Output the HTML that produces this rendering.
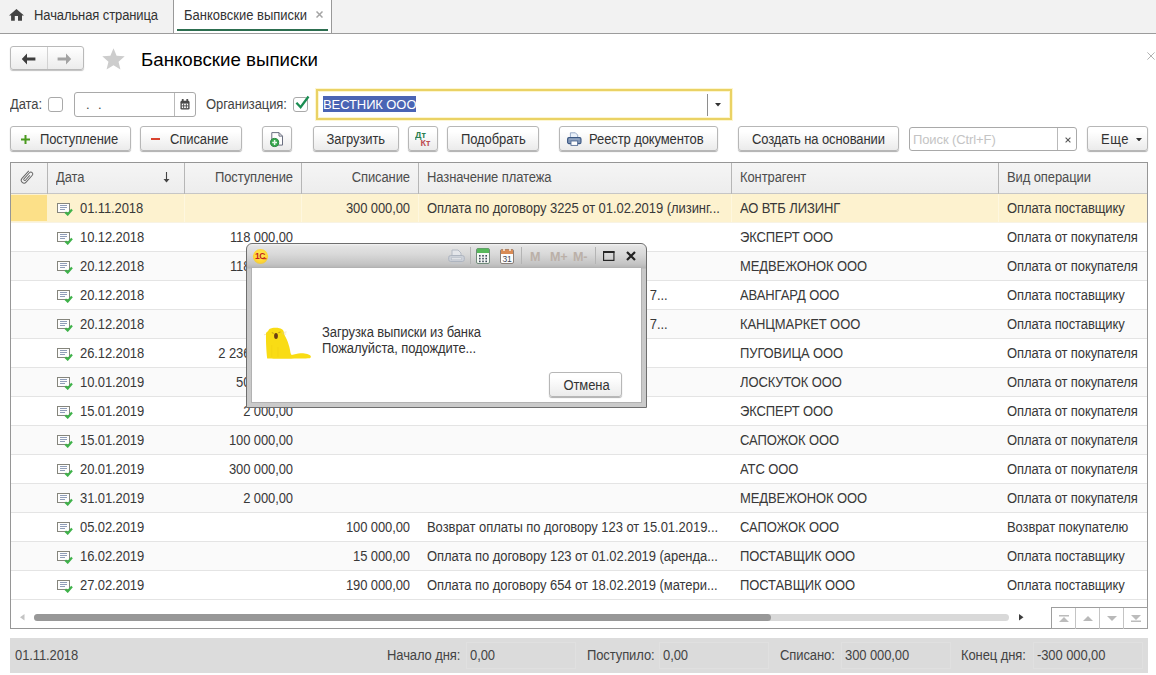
<!DOCTYPE html>
<html lang="ru">
<head>
<meta charset="utf-8">
<title>Банковские выписки</title>
<style>
*{box-sizing:border-box;margin:0;padding:0}
html,body{width:1156px;height:675px;overflow:hidden;background:#fff}
body{font-family:"Liberation Sans",Arial,sans-serif;font-size:13px;color:#333;position:relative;letter-spacing:-0.1px}
.abs{position:absolute}
/* tabs */
#tabs{position:absolute;left:0;top:0;width:1156px;height:34px;background:#f2f2f2;border-bottom:1px solid #9c9c9c}
#tabs .sep{position:absolute;top:0;width:1px;height:33px;background:#999}
#tab2{position:absolute;left:174px;top:0;width:157px;height:33px;background:#fff}
#tab2 .ul{position:absolute;left:3px;right:3px;top:29px;height:2px;background:#2d6e50}
.tt{position:absolute;top:8px;line-height:16px;white-space:nowrap;color:#333}
/* nav */
#nav{position:absolute;left:10px;top:46px;width:74px;height:24px;border:1px solid #b9b9b9;border-radius:3px;background:linear-gradient(#fff,#ececec);box-shadow:0 1px 1px rgba(0,0,0,.25)}
#nav .s{position:absolute;left:36px;top:0;width:1px;height:22px;background:#d2d2d2}
#title{position:absolute;left:141px;top:49px;font-size:18.7px;line-height:22px;color:#000;letter-spacing:0;white-space:nowrap}
/* form */
.lbl{position:absolute;line-height:16px;white-space:nowrap;color:#444}
.cb{position:absolute;width:15px;height:15px;border:1px solid #a9a9a9;border-radius:3px;background:#fff}
.inp{position:absolute;border:1px solid #a9a9a9;border-radius:3px;background:#fff}
.btn{position:absolute;top:126px;height:25px;border:1px solid #b7b7b7;border-radius:3px;background:linear-gradient(#ffffff 20%,#ebebeb);box-shadow:0 1px 1px rgba(0,0,0,.32);white-space:nowrap;line-height:23px;color:#333}
.btn span{position:absolute;top:2px;line-height:22px}
.tt,.lbl,#hdr .h,.row .t,#foot span,#modal .msg{transform:scaleY(1.07);transform-origin:0 12.5px}
.btn span{transform:scaleY(1.07);transform-origin:0 15.5px}
/* table */
#tbl{position:absolute;left:10px;top:162px;width:1138px;height:467px;border:1px solid #969696;background:#fff;overflow:hidden}
#hdr{position:absolute;left:0;top:0;width:1136px;height:31px;background:linear-gradient(#f5f5f5,#ededed);border-bottom:1px solid #c6c6c6}
#hdr .h{position:absolute;top:7px;line-height:16px;color:#4d4d4d;white-space:nowrap}
#hdr .vs{position:absolute;top:0;width:1px;height:31px;background:#b6b6b6}
.row{position:absolute;left:11px;width:1136px;height:29px;border-bottom:1px solid #e4e4e4;background:#fff}
.row.alt{background:#fafafa}
.row.sel{background:#fdf2cf;border-bottom-color:#f8f3e3}
.row .c0{position:absolute;left:0;top:1px;width:36px;height:26px;background:#fce088}
.row i{position:absolute;top:0;width:1px;height:28px;background:#fef7df}
.row .t{position:absolute;top:7px;line-height:16px;white-space:nowrap;color:#383838}
.row .di{position:absolute;left:46px;top:9px}
.row .d{left:69px}
.row .n1{right:854px}
.row .n2{right:737px}
.row .p{left:416px;letter-spacing:-0.05px}
.row .pr{right:479.5px}
.row .k{left:729px}
.row .v{left:996px}
/* footer */
#foot{position:absolute;left:10px;top:638px;width:1138px;height:35px;background:#dcdcdc}
#foot span{position:absolute;top:10px;line-height:16px;white-space:nowrap;color:#444}
#foot i{position:absolute;top:4px;height:27px;background:#dbdbdb;border:1px solid #e0e0e0}
/* modal */
#modal{position:absolute;left:246px;top:243px;width:401px;height:165px;border:1px solid #6e6e6e;border-radius:6px 6px 0 0;background:linear-gradient(#f4f4f4 0,#e4e4e4 2px,#d9d9d9 10px,#c4c4c4 20px,#b4b4b4 24px,#c8c8c8 25px,#cacaca 100%)}
#modal .in{position:absolute;left:5px;top:24px;width:389px;height:134px;background:#fff;border:0;box-shadow:0 0 0 1px #b2b2b2}
.mm{top:5.5px;line-height:14px;font-size:12.6px;font-weight:bold;color:#bbb0a8;letter-spacing:-0.3px}
#modal .msg{position:absolute;line-height:16px;color:#333;white-space:nowrap}
</style>
</head>
<body>
<div id="tabs">
  <svg class="abs" style="left:9px;top:9px" width="15" height="12" viewBox="0 0 15 12"><path d="M7.450 0L15 6.600H13V11.700H9V6.900H5.800V11.700H2.100V6.600H0z" fill="#444"/></svg>
  <span class="tt" style="left:34px">Начальная страница</span>
  <div class="sep" style="left:173px"></div>
  <div id="tab2"><div class="ul"></div></div>
  <span class="tt" style="left:184px;letter-spacing:0">Банковские выписки</span>
  <svg class="abs" style="left:316px;top:11px" width="7" height="7" viewBox="0 0 7 7"><path d="M0.5 0.5l6 6M6.500 0.5L0.5 6.500" stroke="#a4a4a4" stroke-width="1.500"/></svg>
  <div class="sep" style="left:331px"></div>
</div>

<div id="nav"><div class="s"></div>
  <svg class="abs" style="left:10px;top:5.500px" width="15" height="12" viewBox="0 0 15 12"><path d="M6 0.5L0.8 6 6 11.5V7.4h8.4V4.6H6z" fill="#3d3d3d"/></svg>
  <svg class="abs" style="left:46px;top:5.500px" width="15" height="12" viewBox="0 0 15 12"><path d="M9 0.5L14.2 6 9 11.5V7.4H0.6V4.6H9z" fill="#a3a3a3"/></svg>
</div>
<svg class="abs" style="left:102px;top:48px" width="23" height="23" viewBox="0 0 23 23"><path d="M11.50 0.20L14.62 7.71L22.72 8.35L16.54 13.64L18.44 21.55L11.50 17.30L4.56 21.55L6.46 13.64L0.28 8.35L8.38 7.71z" fill="#cdcdcd"/></svg>
<div id="title">Банковские выписки</div>
<svg class="abs" style="left:1146.500px;top:52px" width="8" height="8" viewBox="0 0 8 8"><path d="M0.400 0.400l7.200 7.200M7.600 0.400L0.400 7.600" stroke="#a9a9a9" stroke-width="0.900"/></svg>

<span class="lbl" style="left:10px;top:97px">Дата:</span>
<div class="cb" style="left:48px;top:97px"></div>
<div class="inp" style="left:74px;top:92px;width:122px;height:25px">
  <span class="abs" style="left:11px;top:4px;line-height:16px;color:#444;letter-spacing:8.500px">..</span>
  <div class="abs" style="left:99px;top:0;width:1px;height:23px;background:#b9b9b9"></div>
  <svg class="abs" style="left:105px;top:6px" width="10" height="11" viewBox="0 0 11 12"><rect x="0.5" y="2" width="10" height="9.5" rx="1.5" fill="#4a4a4a"/><rect x="2" y="0" width="2" height="3" fill="#4a4a4a"/><rect x="7" y="0" width="2" height="3" fill="#4a4a4a"/><rect x="2" y="5" width="7" height="5" fill="#fff"/><path d="M4 5v5M7 5v5M2 7.5h7" stroke="#4a4a4a" stroke-width="1"/></svg>
</div>
<span class="lbl" style="left:206px;top:97px">Организация:</span>
<div class="cb" style="left:293px;top:97px"></div>
<svg class="abs" style="left:295px;top:93px" width="15" height="16" viewBox="0 0 15 16"><path d="M1.400 9.700l4.200 4.500L13.500 3.500" fill="none" stroke="#1a8d52" stroke-width="2.300"/></svg>
<div class="abs" style="left:316px;top:89px;width:416px;height:31px;border:2px solid #ead265;background:#fff;box-shadow:0 0 0 1px #fdf6d0, inset 0 0 0 1px #fdf6d0">
  <span class="abs" style="left:5px;top:5px;height:16px;line-height:18px;background:#4a64b4;color:#fff;padding:0 0px;white-space:nowrap">ВЕСТНИК ООО</span>
  <div class="abs" style="left:389px;top:3px;width:1px;height:22px;background:#8e8e8e"></div>
  <svg class="abs" style="left:396.500px;top:12px" width="6" height="3.500" viewBox="0 0 7 4"><path d="M0 0h7L3.5 4z" fill="#333"/></svg>
</div>

<!-- toolbar -->
<div class="btn" style="left:10px;width:121px"><svg class="abs" style="left:10px;top:8px" width="9" height="9" viewBox="0 0 9 9"><path d="M4.5 0v9M0 4.5h9" stroke="#4a9a1e" stroke-width="2"/></svg><span style="left:29px">Поступление</span></div>
<div class="btn" style="left:140px;width:102px"><div class="abs" style="left:10px;top:11px;width:9px;height:2px;background:#d9432f"></div><span style="left:29px">Списание</span></div>
<div class="btn" style="left:262px;width:30px"><svg class="abs" style="left:7px;top:4px" width="16" height="17" viewBox="0 0 16 17"><path d="M1.800 1.600h7.200l3.500 3.500v9h-10.700z" fill="#fdfdfd" stroke="#6b6f80"/><path d="M9 1.600v3.500h3.500" fill="none" stroke="#6b6f80"/><circle cx="4.600" cy="11.500" r="4.100" fill="#35a84c" stroke="#1f7f38" stroke-width=".9"/><path d="M4.600 9.100v4.800M2.200 11.500h4.800" stroke="#e9f7ea" stroke-width="1.500"/></svg></div>
<div class="btn" style="left:313px;width:86px"><span style="left:12.500px">Загрузить</span></div>
<div class="btn" style="left:408px;width:30px"><span style="left:6px;top:0px;font-size:9px;font-weight:bold;color:#2b8050;letter-spacing:0;line-height:12px;top:2px">Дт</span><span style="left:11.500px;font-size:9px;font-weight:bold;color:#bd4d52;letter-spacing:0;line-height:12px;top:10px">Кт</span></div>
<div class="btn" style="left:447px;width:92px"><span style="left:13px">Подобрать</span></div>
<div class="btn" style="left:559px;width:159px"><svg class="abs" style="left:7px;top:5px" width="15" height="14" viewBox="0 0 15 14"><path d="M3.400 6V0.800h5l2.300 2.300V6z" fill="#eaf1fa" stroke="#8ea3c2" stroke-width=".9"/><rect x="0.600" y="5.600" width="13.400" height="6" rx="1.400" fill="#7f95b6" stroke="#3c5883" stroke-width="1.100"/><path d="M2 7h10.600" stroke="#a9bad2" stroke-width=".8"/><rect x="4" y="9" width="6.600" height="4.400" fill="#fff" stroke="#5b7299" stroke-width=".9"/></svg><span style="left:29px">Реестр документов</span></div>
<div class="btn" style="left:738px;width:161px"><span style="left:13px">Создать на основании</span></div>
<div class="inp" style="left:909px;top:127px;width:168px;height:24px">
  <span class="abs" style="left:3px;top:3.500px;line-height:16px;color:#c4c4c4;white-space:nowrap">Поиск (Ctrl+F)</span>
  <div class="abs" style="left:147px;top:0;width:1px;height:22px;background:#b9b9b9"></div>
  <svg class="abs" style="left:154.500px;top:8.500px" width="6" height="6" viewBox="0 0 7 7"><path d="M0.700 0.700l5.600 5.600M6.300 0.700L0.700 6.300" stroke="#5a5a5a" stroke-width="1.300"/></svg>
</div>
<div class="btn" style="left:1087px;width:61px"><span style="left:13px;letter-spacing:0.500px">Еще</span><svg class="abs" style="left:47.700px;top:10.500px" width="6" height="3.500" viewBox="0 0 7 4"><path d="M0 0h7L3.5 4z" fill="#333"/></svg></div>

<!-- table -->
<div id="tbl">
  <div id="hdr">
    <div class="vs" style="left:36px"></div><div class="vs" style="left:173px"></div><div class="vs" style="left:290px"></div><div class="vs" style="left:407px"></div><div class="vs" style="left:720px"></div><div class="vs" style="left:987px"></div>
    <svg class="abs" style="left:8px;top:5.500px" width="16" height="16" viewBox="-8 -8 16 16"><path transform="rotate(42)" d="M-2.800 -5.800V4.400a2.800 2.800 0 0 0 5.600 0V-4.800a1.900 1.900 0 0 0-3.800 0V3.400a1 1 0 0 0 2 0V-3" fill="none" stroke="#666" stroke-width="0.950"/></svg>
    <span class="h" style="left:45px">Дата</span>
    <svg class="abs" style="left:151.800px;top:9px" width="7" height="11" viewBox="0 0 7 11"><path d="M3.500 0v8" stroke="#444" stroke-width="1.100"/><path d="M0.500 7h6L3.500 10.500z" fill="#444"/></svg>
    <span class="h" style="right:854px">Поступление</span>
    <span class="h" style="right:737px">Списание</span>
    <span class="h" style="left:416px">Назначение платежа</span>
    <span class="h" style="left:729px">Контрагент</span>
    <span class="h" style="left:996px">Вид операции</span>
  </div>
</div>
<div class="row sel" style="top:194px"><div class="c0"></div><i style="left:173px"></i><i style="left:290px"></i><i style="left:407px"></i><i style="left:720px"></i><i style="left:987px"></i><svg class="di" width="16" height="13" viewBox="0 0 16 13"><rect x="0.5" y="0.5" width="12" height="9" fill="#fdfdfd" stroke="#85857c"/><path d="M3 2.500h7M3 4.500h7M3 6.500h5" stroke="#8f9db8" stroke-width="1"/><path d="M8.3 9.2l2.4 2.3 4.3-5" fill="none" stroke="#3fb24a" stroke-width="2.2"/></svg><span class="t d">01.11.2018</span><span class="t n1"></span><span class="t n2">300 000,00</span><span class="t p">Оплата по договору 3225 от 01.02.2019 (лизинг...</span><span class="t k">АО ВТБ ЛИЗИНГ</span><span class="t v">Оплата поставщику</span></div>
<div class="row" style="top:223px"><svg class="di" width="16" height="13" viewBox="0 0 16 13"><rect x="0.5" y="0.5" width="12" height="9" fill="#fdfdfd" stroke="#85857c"/><path d="M3 2.500h7M3 4.500h7M3 6.500h5" stroke="#8f9db8" stroke-width="1"/><path d="M8.3 9.2l2.4 2.3 4.3-5" fill="none" stroke="#3fb24a" stroke-width="2.2"/></svg><span class="t d">10.12.2018</span><span class="t n1">118 000,00</span><span class="t n2"></span><span class="t p"></span><span class="t k">ЭКСПЕРТ ООО</span><span class="t v">Оплата от покупателя</span></div>
<div class="row alt" style="top:252px"><svg class="di" width="16" height="13" viewBox="0 0 16 13"><rect x="0.5" y="0.5" width="12" height="9" fill="#fdfdfd" stroke="#85857c"/><path d="M3 2.500h7M3 4.500h7M3 6.500h5" stroke="#8f9db8" stroke-width="1"/><path d="M8.3 9.2l2.4 2.3 4.3-5" fill="none" stroke="#3fb24a" stroke-width="2.2"/></svg><span class="t d">20.12.2018</span><span class="t n1">118 000,00</span><span class="t n2"></span><span class="t p"></span><span class="t k">МЕДВЕЖОНОК ООО</span><span class="t v">Оплата от покупателя</span></div>
<div class="row" style="top:281px"><svg class="di" width="16" height="13" viewBox="0 0 16 13"><rect x="0.5" y="0.5" width="12" height="9" fill="#fdfdfd" stroke="#85857c"/><path d="M3 2.500h7M3 4.500h7M3 6.500h5" stroke="#8f9db8" stroke-width="1"/><path d="M8.3 9.2l2.4 2.3 4.3-5" fill="none" stroke="#3fb24a" stroke-width="2.2"/></svg><span class="t d">20.12.2018</span><span class="t n1"></span><span class="t n2">35 400,00</span><span class="t pr">Оплата по договору 12 от 01.12.2018 (мебель) 7...</span><span class="t k">АВАНГАРД ООО</span><span class="t v">Оплата поставщику</span></div>
<div class="row alt" style="top:310px"><svg class="di" width="16" height="13" viewBox="0 0 16 13"><rect x="0.5" y="0.5" width="12" height="9" fill="#fdfdfd" stroke="#85857c"/><path d="M3 2.500h7M3 4.500h7M3 6.500h5" stroke="#8f9db8" stroke-width="1"/><path d="M8.3 9.2l2.4 2.3 4.3-5" fill="none" stroke="#3fb24a" stroke-width="2.2"/></svg><span class="t d">20.12.2018</span><span class="t n1"></span><span class="t n2">11 800,00</span><span class="t pr">Оплата по договору 45 от 03.12.2018 (бумага) 7...</span><span class="t k">КАНЦМАРКЕТ ООО</span><span class="t v">Оплата поставщику</span></div>
<div class="row" style="top:339px"><svg class="di" width="16" height="13" viewBox="0 0 16 13"><rect x="0.5" y="0.5" width="12" height="9" fill="#fdfdfd" stroke="#85857c"/><path d="M3 2.500h7M3 4.500h7M3 6.500h5" stroke="#8f9db8" stroke-width="1"/><path d="M8.3 9.2l2.4 2.3 4.3-5" fill="none" stroke="#3fb24a" stroke-width="2.2"/></svg><span class="t d">26.12.2018</span><span class="t n1">2 236 000,00</span><span class="t n2"></span><span class="t p"></span><span class="t k">ПУГОВИЦА ООО</span><span class="t v">Оплата от покупателя</span></div>
<div class="row alt" style="top:368px"><svg class="di" width="16" height="13" viewBox="0 0 16 13"><rect x="0.5" y="0.5" width="12" height="9" fill="#fdfdfd" stroke="#85857c"/><path d="M3 2.500h7M3 4.500h7M3 6.500h5" stroke="#8f9db8" stroke-width="1"/><path d="M8.3 9.2l2.4 2.3 4.3-5" fill="none" stroke="#3fb24a" stroke-width="2.2"/></svg><span class="t d">10.01.2019</span><span class="t n1">50 000,00</span><span class="t n2"></span><span class="t p"></span><span class="t k">ЛОСКУТОК ООО</span><span class="t v">Оплата от покупателя</span></div>
<div class="row" style="top:397px"><svg class="di" width="16" height="13" viewBox="0 0 16 13"><rect x="0.5" y="0.5" width="12" height="9" fill="#fdfdfd" stroke="#85857c"/><path d="M3 2.500h7M3 4.500h7M3 6.500h5" stroke="#8f9db8" stroke-width="1"/><path d="M8.3 9.2l2.4 2.3 4.3-5" fill="none" stroke="#3fb24a" stroke-width="2.2"/></svg><span class="t d">15.01.2019</span><span class="t n1">2 000,00</span><span class="t n2"></span><span class="t p"></span><span class="t k">ЭКСПЕРТ ООО</span><span class="t v">Оплата от покупателя</span></div>
<div class="row alt" style="top:426px"><svg class="di" width="16" height="13" viewBox="0 0 16 13"><rect x="0.5" y="0.5" width="12" height="9" fill="#fdfdfd" stroke="#85857c"/><path d="M3 2.500h7M3 4.500h7M3 6.500h5" stroke="#8f9db8" stroke-width="1"/><path d="M8.3 9.2l2.4 2.3 4.3-5" fill="none" stroke="#3fb24a" stroke-width="2.2"/></svg><span class="t d">15.01.2019</span><span class="t n1">100 000,00</span><span class="t n2"></span><span class="t p"></span><span class="t k">САПОЖОК ООО</span><span class="t v">Оплата от покупателя</span></div>
<div class="row" style="top:455px"><svg class="di" width="16" height="13" viewBox="0 0 16 13"><rect x="0.5" y="0.5" width="12" height="9" fill="#fdfdfd" stroke="#85857c"/><path d="M3 2.500h7M3 4.500h7M3 6.500h5" stroke="#8f9db8" stroke-width="1"/><path d="M8.3 9.2l2.4 2.3 4.3-5" fill="none" stroke="#3fb24a" stroke-width="2.2"/></svg><span class="t d">20.01.2019</span><span class="t n1">300 000,00</span><span class="t n2"></span><span class="t p"></span><span class="t k">АТС ООО</span><span class="t v">Оплата от покупателя</span></div>
<div class="row alt" style="top:484px"><svg class="di" width="16" height="13" viewBox="0 0 16 13"><rect x="0.5" y="0.5" width="12" height="9" fill="#fdfdfd" stroke="#85857c"/><path d="M3 2.500h7M3 4.500h7M3 6.500h5" stroke="#8f9db8" stroke-width="1"/><path d="M8.3 9.2l2.4 2.3 4.3-5" fill="none" stroke="#3fb24a" stroke-width="2.2"/></svg><span class="t d">31.01.2019</span><span class="t n1">2 000,00</span><span class="t n2"></span><span class="t p"></span><span class="t k">МЕДВЕЖОНОК ООО</span><span class="t v">Оплата от покупателя</span></div>
<div class="row" style="top:513px"><svg class="di" width="16" height="13" viewBox="0 0 16 13"><rect x="0.5" y="0.5" width="12" height="9" fill="#fdfdfd" stroke="#85857c"/><path d="M3 2.500h7M3 4.500h7M3 6.500h5" stroke="#8f9db8" stroke-width="1"/><path d="M8.3 9.2l2.4 2.3 4.3-5" fill="none" stroke="#3fb24a" stroke-width="2.2"/></svg><span class="t d">05.02.2019</span><span class="t n1"></span><span class="t n2">100 000,00</span><span class="t p">Возврат оплаты по договору 123 от 15.01.2019...</span><span class="t k">САПОЖОК ООО</span><span class="t v">Возврат покупателю</span></div>
<div class="row alt" style="top:542px"><svg class="di" width="16" height="13" viewBox="0 0 16 13"><rect x="0.5" y="0.5" width="12" height="9" fill="#fdfdfd" stroke="#85857c"/><path d="M3 2.500h7M3 4.500h7M3 6.500h5" stroke="#8f9db8" stroke-width="1"/><path d="M8.3 9.2l2.4 2.3 4.3-5" fill="none" stroke="#3fb24a" stroke-width="2.2"/></svg><span class="t d">16.02.2019</span><span class="t n1"></span><span class="t n2">15 000,00</span><span class="t p">Оплата по договору 123 от 01.02.2019 (аренда...</span><span class="t k">ПОСТАВЩИК ООО</span><span class="t v">Оплата поставщику</span></div>
<div class="row" style="top:571px"><svg class="di" width="16" height="13" viewBox="0 0 16 13"><rect x="0.5" y="0.5" width="12" height="9" fill="#fdfdfd" stroke="#85857c"/><path d="M3 2.500h7M3 4.500h7M3 6.500h5" stroke="#8f9db8" stroke-width="1"/><path d="M8.3 9.2l2.4 2.3 4.3-5" fill="none" stroke="#3fb24a" stroke-width="2.2"/></svg><span class="t d">27.02.2019</span><span class="t n1"></span><span class="t n2">190 000,00</span><span class="t p">Оплата по договору 654 от 18.02.2019 (матери...</span><span class="t k">ПОСТАВЩИК ООО</span><span class="t v">Оплата поставщику</span></div>

<!-- scrollbar -->
<svg class="abs" style="left:20px;top:614px" width="4.500" height="6.500" viewBox="0 0 5 7"><path d="M5 0v7L0 3.5z" fill="#c4c4c4"/></svg>
<div class="abs" style="left:34px;top:613.500px;width:975px;height:7px;border-radius:4px;background:#d9d9d9"></div>
<div class="abs" style="left:34px;top:613.500px;width:737px;height:7px;border-radius:4px;background:#989898"></div>
<svg class="abs" style="left:1019px;top:614px" width="4.500" height="6.500" viewBox="0 0 5 7"><path d="M0 0v7l5-3.500z" fill="#3c3c3c"/></svg>
<div class="abs" style="left:1051px;top:607px;width:97px;height:22px;border:1px solid #9e9e9e;background:#fff">
  <div class="abs" style="left:23px;top:0;width:1px;height:21px;background:#c4c4c4"></div>
  <div class="abs" style="left:47px;top:0;width:1px;height:21px;background:#c4c4c4"></div>
  <div class="abs" style="left:71px;top:0;width:1px;height:21px;background:#c4c4c4"></div>
  <svg class="abs" style="left:7px;top:7px" width="10" height="7" viewBox="0 0 10 7"><path d="M0 0h10v1.500H0zM5 2l5 5H0z" fill="#bcbcbc"/></svg>
  <svg class="abs" style="left:31px;top:8px" width="10" height="5" viewBox="0 0 10 5"><path d="M5 0l5 5H0z" fill="#b9b9b9"/></svg>
  <svg class="abs" style="left:55px;top:8px" width="10" height="5" viewBox="0 0 10 5"><path d="M0 0h10L5 5z" fill="#b9b9b9"/></svg>
  <svg class="abs" style="left:79px;top:7px" width="10" height="7" viewBox="0 0 10 7"><path d="M0 0h10L5 5zM0 5.500h10V7H0z" fill="#bcbcbc"/></svg>
</div>

<div id="foot">
  <span style="left:5px">01.11.2018</span>
  <span style="left:377px">Начало дня:</span><i style="left:456px;width:110px"></i><span style="left:460px">0,00</span>
  <span style="left:577px">Поступило:</span><i style="left:649px;width:110px"></i><span style="left:653px">0,00</span>
  <span style="left:770px">Списано:</span><i style="left:831px;width:110px"></i><span style="left:835px">300 000,00</span>
  <span style="left:951px">Конец дня:</span><i style="left:1023px;width:110px"></i><span style="left:1027px">-300 000,00</span>
</div>

<!-- modal -->
<div id="modal">
  <div class="in"></div>
  <!-- 1C logo -->
  <svg class="abs" style="left:5px;top:4px" width="17" height="17" viewBox="0 0 17 17"><defs><radialGradient id="lg" cx="50%" cy="40%" r="60%"><stop offset="0" stop-color="#ffe95a"/><stop offset="0.75" stop-color="#ffd633"/><stop offset="1" stop-color="#e9c64a"/></radialGradient></defs><circle cx="8.500" cy="8.500" r="7.600" fill="url(#lg)"/><text x="3" y="11.300" font-family="Liberation Sans, sans-serif" font-weight="bold" font-size="8.500" fill="#c3211b" letter-spacing="-0.6">1С</text><path d="M10.500 10.700h4" stroke="#c3211b" stroke-width="1"/></svg>
  <!-- printer (disabled) -->
  <svg class="abs" style="left:201px;top:5px" width="17" height="15" viewBox="0 0 17 15"><path d="M4 6.500V1h6l3 3v2.500" fill="#e4e6ea" stroke="#b4bac4"/><rect x="0.700" y="6.500" width="15.600" height="6" rx="2" fill="#ccd1d9" stroke="#aeb5c0"/><rect x="3.500" y="8.800" width="10" height="2" fill="#e6e8ec" stroke="#b4bac4" stroke-width=".6"/><path d="M3 14.200h11" stroke="#c4c8ce" stroke-width="1"/></svg>
  <div class="abs" style="left:223px;top:3px;width:1px;height:17px;background:#b4b4b4"></div>
  <!-- calculator -->
  <svg class="abs" style="left:229px;top:4px" width="14" height="16" viewBox="0 0 14 16"><rect x="0.500" y="0.500" width="13" height="15" rx="1.500" fill="#f4f7f4" stroke="#6f8a78"/><path d="M1 1.500a1 1 0 0 1 1-1h10a1 1 0 0 1 1 1V5H1z" fill="#56b85a"/><g fill="#3d4a5a"><rect x="3" y="7" width="1.600" height="1.600"/><rect x="6.200" y="7" width="1.600" height="1.600"/><rect x="9.400" y="7" width="1.600" height="1.600"/><rect x="3" y="9.800" width="1.600" height="1.600"/><rect x="6.200" y="9.800" width="1.600" height="1.600"/><rect x="9.400" y="9.800" width="1.600" height="1.600"/><rect x="3" y="12.600" width="1.600" height="1.600"/><rect x="6.200" y="12.600" width="1.600" height="1.600"/><rect x="9.400" y="12.600" width="1.600" height="1.600"/></g></svg>
  <!-- calendar -->
  <svg class="abs" style="left:253px;top:4px" width="14" height="16" viewBox="0 0 14 16"><rect x="0.500" y="1.500" width="13" height="14" rx="1.500" fill="#fdfdfd" stroke="#8a7f78"/><path d="M1 2.500a1 1 0 0 1 1-1h10a1 1 0 0 1 1 1V6H1z" fill="#d98b55"/><rect x="3.200" y="0" width="1.600" height="3" fill="#f3e9df"/><rect x="9.200" y="0" width="1.600" height="3" fill="#f3e9df"/><text x="7" y="13.600" text-anchor="middle" font-family="Liberation Sans, sans-serif" font-size="8.500" fill="#3d4656" letter-spacing="-0.3">31</text></svg>
  <div class="abs" style="left:274px;top:3px;width:1px;height:17px;background:#b4b4b4"></div>
  <span class="abs mm" style="left:283px">M</span><span class="abs mm" style="left:303px">M+</span><span class="abs mm" style="left:326px">M-</span>
  <div class="abs" style="left:348px;top:3px;width:1px;height:17px;background:#b4b4b4"></div>
  <svg class="abs" style="left:356px;top:7px" width="11.500" height="10" viewBox="0 0 12 10" preserveAspectRatio="none"><rect x="0.600" y="1" width="10.800" height="8.400" fill="none" stroke="#262626" stroke-width="1.200"/><rect x="0" y="0" width="12" height="2" fill="#262626"/></svg>
  <svg class="abs" style="left:379px;top:7px" width="10" height="10" viewBox="0 0 10 10"><path d="M1 1l8 8M9 1L1 9" stroke="#222" stroke-width="2.200"/></svg>
  <!-- cat -->
  <svg class="abs" style="left:15px;top:81px" width="52" height="36" viewBox="0 0 52 36"><path d="M5.200 33.400C4.300 26 3.800 15 4 9.600 3.600 8.300 4.800 6.800 6 6.300 6.500 5 7 4.300 7.800 3.800 9.500 2.900 14 2.300 17.400 3.200 19 3.500 20.300 4.300 20.900 5.100 21.600 5.700 22 7.500 22.300 9.600 23 11.500 24.100 13 24.800 14.400 25.700 16.500 26.400 18.500 26.800 20.200 27.400 22 27.800 23.800 28 25 28.300 26.800 28.600 28.200 28.900 29.100L29.700 29.900C32.500 29.300 35.500 28.500 38.600 28.300 41 28.200 43.500 28.500 45.200 29.100 47 29.600 48.500 30.300 48.800 31.200 49 32.200 48.500 33 47.600 33.300 40 33.800 15 33.800 5.200 33.400z" fill="#f9dc14"/><ellipse cx="14" cy="11" rx="1.900" ry="2.900" fill="#6a3d12"/><path d="M9.800 7.600l2 0.800M16.300 7.700l2.200-0.700" stroke="#b08f1a" stroke-width=".8"/><path d="M20 7.800l4.600-0.900M20 8.800l4.200 0.300M4.500 9.200L2 9.800" stroke="#e0d08a" stroke-width=".5"/><path d="M9.800 20v12M16 22v10" stroke="#f0d010" stroke-width=".6"/></svg>
  <span class="msg" style="left:75px;top:80.500px">Загрузка выписки из банка</span>
  <span class="msg" style="left:75px;top:96.500px">Пожалуйста, подождите...</span>
  <div class="btn" style="left:302px;top:128px;width:73px;height:25px"><span style="left:13.500px">Отмена</span></div>
</div>
</body>
</html>
